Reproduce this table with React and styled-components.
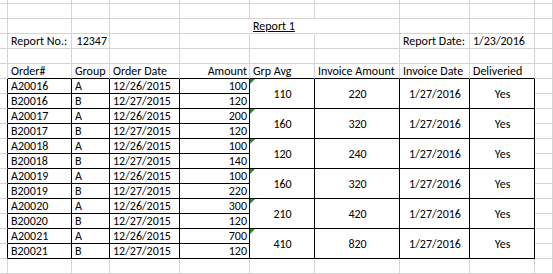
import styled, { createGlobalStyle } from 'styled-components';

const GRID = '#d4d4d4';

const GlobalStyle = createGlobalStyle`
	html, body {
		margin: 0;
		padding: 0;
		background: #fff;
	}
`;

const Sheet = styled.div`
	display: grid;
	grid-template-columns: 8px 64px 38px 70px 70px 65px 85px 70px 65px 1fr;
	grid-template-rows: 4px repeat(18, 15px);
	width: 553px;
	height: 274px;
	overflow: hidden;
	font-family: Carlito, 'Open Sans', sans-serif;
	font-size: 12px;
	color: #000;
`;

const Cell = styled.div`
	position: relative;
	box-sizing: border-box;
	display: flex;
	align-items: ${({ $middle }) => ($middle ? 'center' : 'flex-end')};
	justify-content: ${({ $align }) =>
		$align === 'right' ? 'flex-end' : $align === 'center' ? 'center' : 'flex-start'};
	grid-row: ${({ $rows }) => ($rows ? `span ${$rows}` : 'auto')};
	padding: 0 2px 0 3px;
	line-height: 14px;
	white-space: nowrap;
	border-right: 1px solid
		${({ $right }) => ($right === 'black' ? '#000' : $right === 'none' ? 'transparent' : GRID)};
	border-bottom: 1px solid ${({ $bottom }) => ($bottom === 'black' ? '#000' : GRID)};
	text-decoration: ${({ $underline }) => ($underline ? 'underline' : 'none')};
`;

const Flag = styled.span`
	position: absolute;
	top: 0;
	left: 0;
	width: 0;
	height: 0;
	border-top: 5px solid #24892f;
	border-right: 5px solid transparent;
`;

const orders = [
	['20016', '100', '120', '110', '220'],
	['20017', '200', '120', '160', '320'],
	['20018', '100', '140', '120', '240'],
	['20019', '100', '220', '160', '320'],
	['20020', '300', '120', '210', '420'],
	['20021', '700', '120', '410', '820'],
];

const EmptyRow = ({ id }) =>
	Array.from({ length: 10 }, (_, i) => <Cell key={`${id}-${i}`} />);

const OrderPair = ({ id, amountA, amountB, avg, invoice }) => (
	<>
		<Cell $right="black" />
		<Cell $right="black" $bottom="black">A{id}</Cell>
		<Cell $right="black" $bottom="black">A</Cell>
		<Cell $right="black" $bottom="black">12/26/2015</Cell>
		<Cell $right="black" $bottom="black" $align="right">{amountA}</Cell>
		<Cell $rows={2} $middle $align="center" $right="black" $bottom="black">
			<Flag />
			{avg}
		</Cell>
		<Cell $rows={2} $middle $align="center" $right="black" $bottom="black">{invoice}</Cell>
		<Cell $rows={2} $middle $align="center" $right="black" $bottom="black">1/27/2016</Cell>
		<Cell $rows={2} $middle $align="center" $right="black" $bottom="black">Yes</Cell>
		<Cell />

		<Cell $right="black" />
		<Cell $right="black" $bottom="black">B{id}</Cell>
		<Cell $right="black" $bottom="black">B</Cell>
		<Cell $right="black" $bottom="black">12/27/2015</Cell>
		<Cell $right="black" $bottom="black" $align="right">{amountB}</Cell>
		<Cell />
	</>
);

const headers = ['Order#', 'Group', 'Order Date', 'Amount', 'Grp Avg', 'Invoice Amount', 'Invoice Date', 'Deliveried'];

export default function App() {
	return (
		<>
			<GlobalStyle />
			<Sheet>
				<EmptyRow id="r0" />
				<EmptyRow id="r1" />

				<Cell />
				<Cell />
				<Cell />
				<Cell />
				<Cell $right="none" />
				<Cell $right="none" $underline>Report 1</Cell>
				<Cell />
				<Cell />
				<Cell />
				<Cell />

				<Cell />
				<Cell>Report No.:</Cell>
				<Cell $align="right">12347</Cell>
				<Cell />
				<Cell />
				<Cell />
				<Cell />
				<Cell>Report Date:</Cell>
				<Cell>1/23/2016</Cell>
				<Cell />

				<EmptyRow id="r4" />

				<Cell />
				{headers.map((title) => (
					<Cell key={title} $bottom="black" $align={title === 'Amount' ? 'right' : 'left'}>
						{title}
					</Cell>
				))}
				<Cell />

				{orders.map(([id, amountA, amountB, avg, invoice]) => (
					<OrderPair
						key={id}
						id={id}
						amountA={amountA}
						amountB={amountB}
						avg={avg}
						invoice={invoice}
					/>
				))}

				<EmptyRow id="r18" />
			</Sheet>
		</>
	);
}
